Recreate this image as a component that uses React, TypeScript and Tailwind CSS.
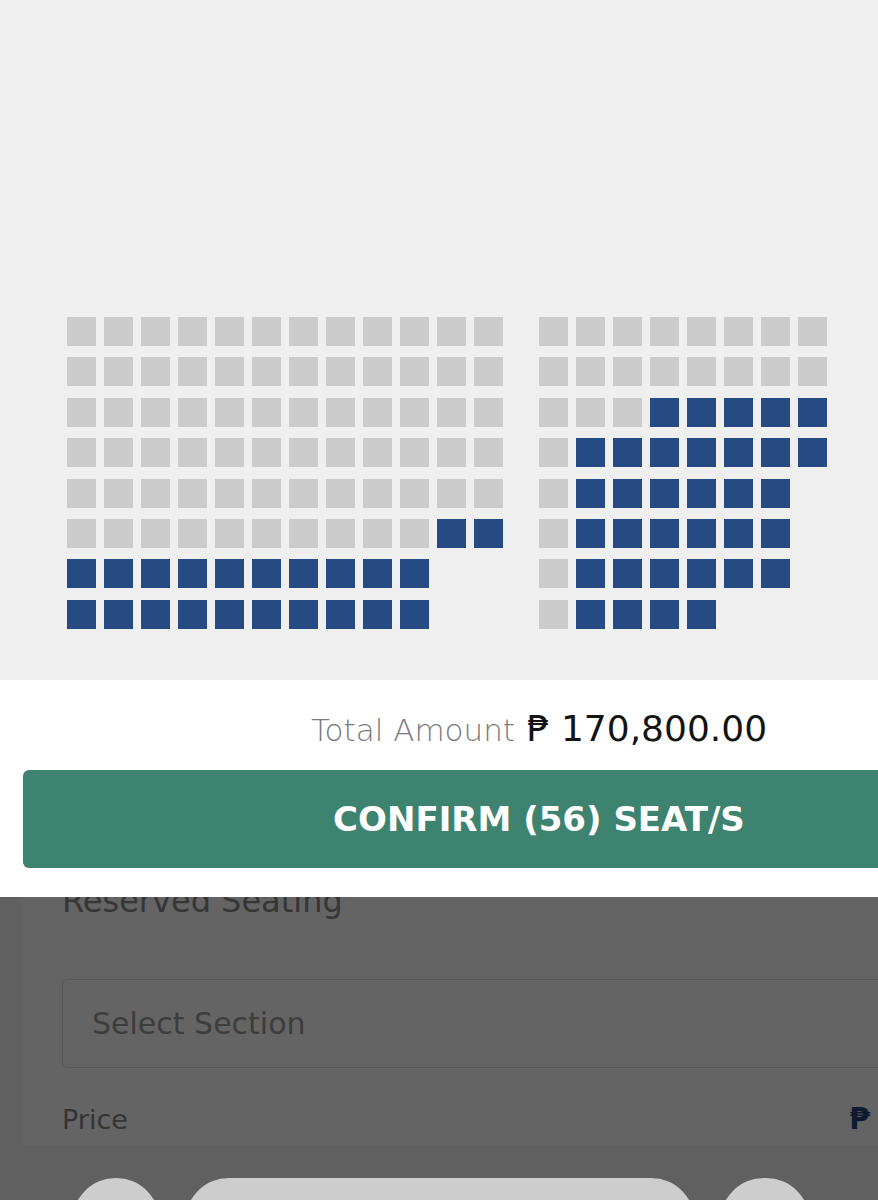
import React from 'react'

// g = taken / available (gray), b = selected (blue), . = no seat
const leftBlock = [
  'gggggggggggg',
  'gggggggggggg',
  'gggggggggggg',
  'gggggggggggg',
  'gggggggggggg',
  'ggggggggggbb',
  'bbbbbbbbbb..',
  'bbbbbbbbbb..',
]

const rightBlock = [
  'gggggggg',
  'gggggggg',
  'gggbbbbb',
  'gbbbbbbb',
  'gbbbbbb.',
  'gbbbbbb.',
  'gbbbbbb.',
  'gbbbb...',
]

function Seat({ kind }: { kind: string }) {
  if (kind === '.') return <div className="w-[29px] h-[29px]" />
  return (
    <div
      className={
        kind === 'b'
          ? 'w-[29px] h-[29px] bg-[#264b83]'
          : 'w-[29px] h-[29px] bg-[#cbcbcb]'
      }
    />
  )
}

function SeatBlock({ rows, cols }: { rows: string[]; cols: 12 | 8 }) {
  return (
    <div
      className={
        cols === 12
          ? 'grid grid-cols-[repeat(12,29px)] gap-x-[8px] gap-y-[11.4px]'
          : 'grid grid-cols-[repeat(8,29px)] gap-x-[8px] gap-y-[11.4px]'
      }
    >
      {rows.map((row, r) =>
        row.split('').map((c, i) => <Seat key={r + '-' + i} kind={c} />)
      )}
    </div>
  )
}

export default function App() {
  return (
    <div className="w-[878px] h-[1200px] overflow-hidden flex flex-col font-['DejaVu_Sans',sans-serif]">
      {/* Mapa de asientos */}
      <div className="h-[680px] shrink-0 bg-[#efefef] pt-[317px] pl-[67px]">
        <div className="flex gap-[36px]">
          <SeatBlock rows={leftBlock} cols={12} />
          <SeatBlock rows={rightBlock} cols={8} />
        </div>
      </div>

      {/* Panel blanco: total + confirmar */}
      <div className="h-[217px] shrink-0 bg-white overflow-hidden pl-[23px] pt-[31px]">
        <div className="w-[1032px]">
          <div className="flex items-baseline justify-center h-[36px] leading-none">
            <span className="text-[31px] font-light text-[#7b7b7b]">Total Amount</span>
            <span className="ml-[12px] text-[36px] text-[#141414]">₱</span>
            <span className="ml-[11px] text-[36px] text-[#141414]">170,800.00</span>
          </div>
          <button className="mt-[23px] w-full h-[98px] rounded-[6px] bg-[#3e8270] flex items-center justify-center text-white text-[34px] font-bold leading-none">
            CONFIRM (56) SEAT/S
          </button>
        </div>
      </div>

      {/* Contenido detrás del overlay (el título queda tapado por el panel) */}
      <div className="flex-1 bg-[#606060] overflow-hidden">
        <div className="ml-[22px] h-[248px] bg-[#646464] pl-[40px] flex flex-col">
          <div className="mt-[-12px] text-[32px] leading-none text-[#363636]">Reserved Seating</div>
          <div className="mt-[62px] h-[89px] w-[1000px] shrink-0 border border-[#575757] rounded-[5px] pl-[29px] flex items-center">
            <span className="text-[30px] leading-none text-[#3d3d3d]">Select Section</span>
          </div>
          <div className="mt-[36px] w-[808px] flex items-baseline justify-between leading-none">
            <span className="text-[27px] text-[#343434]">Price</span>
            <span className="text-[30px] font-bold text-[#0e1a30]">₱</span>
          </div>
        </div>
        <div className="mt-[33px] pl-[72px] flex gap-[25px]">
          <div className="w-[88px] h-[88px] rounded-full bg-[#cdcdcd] shrink-0" />
          <div className="w-[510px] h-[88px] rounded-[44px] bg-[#cdcdcd] shrink-0" />
          <div className="w-[90px] h-[88px] rounded-full bg-[#cdcdcd] shrink-0" />
        </div>
      </div>
    </div>
  )
}
